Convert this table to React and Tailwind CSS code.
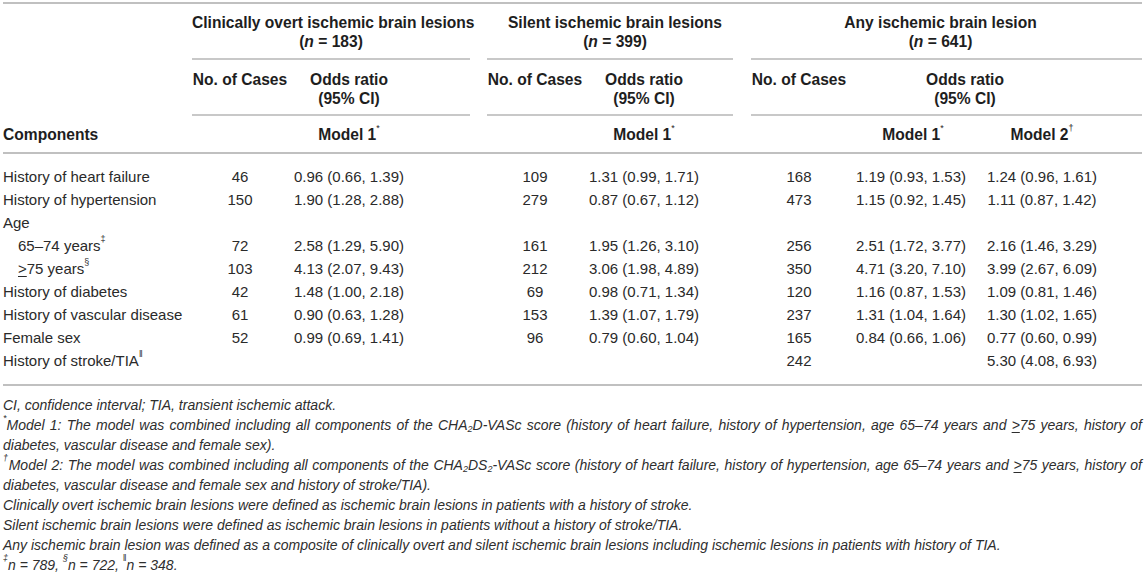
import React from "react";

const COLS =
  "grid grid-cols-[189px_96px_122px_60px_17px_96px_122px_28px_18px_96px_128px_134px_33px]";

function Sup({ children }) {
  return <sup className="text-[9px] align-[5px] leading-none font-normal">{children}</sup>;
}

function Ge() {
  return <span className="underline underline-offset-2">&gt;</span>;
}

const rows = [
  { label: "History of heart failure", v: ["46", "0.96 (0.66, 1.39)", "109", "1.31 (0.99, 1.71)", "168", "1.19 (0.93, 1.53)", "1.24 (0.96, 1.61)"] },
  { label: "History of hypertension", v: ["150", "1.90 (1.28, 2.88)", "279", "0.87 (0.67, 1.12)", "473", "1.15 (0.92, 1.45)", "1.11 (0.87, 1.42)"] },
  { label: "Age", v: ["", "", "", "", "", "", ""] },
  { label: (<>65–74 years<Sup>‡</Sup></>), indent: true, v: ["72", "2.58 (1.29, 5.90)", "161", "1.95 (1.26, 3.10)", "256", "2.51 (1.72, 3.77)", "2.16 (1.46, 3.29)"] },
  { label: (<><Ge />75 years<Sup>§</Sup></>), indent: true, v: ["103", "4.13 (2.07, 9.43)", "212", "3.06 (1.98, 4.89)", "350", "4.71 (3.20, 7.10)", "3.99 (2.67, 6.09)"] },
  { label: "History of diabetes", v: ["42", "1.48 (1.00, 2.18)", "69", "0.98 (0.71, 1.34)", "120", "1.16 (0.87, 1.53)", "1.09 (0.81, 1.46)"] },
  { label: "History of vascular disease", v: ["61", "0.90 (0.63, 1.28)", "153", "1.39 (1.07, 1.79)", "237", "1.31 (1.04, 1.64)", "1.30 (1.02, 1.65)"] },
  { label: "Female sex", v: ["52", "0.99 (0.69, 1.41)", "96", "0.79 (0.60, 1.04)", "165", "0.84 (0.66, 1.06)", "0.77 (0.60, 0.99)"] },
  { label: (<>History of stroke/TIA<Sup>‖</Sup></>), v: ["", "", "", "", "242", "", "5.30 (4.08, 6.93)"] },
];

export default function App() {
  return (
    <div
      className="bg-white w-[1145px] h-[577px] overflow-hidden text-[#2a2a2a]"
      style={{ fontFamily: '"Liberation Sans", Arial, sans-serif' }}
    >
      <div className="ml-[3px] w-[1139px] pt-[2px]">
        <div className="border-t-2 border-[#c0c0c0]">
          {/* Header row 1 */}
          <div className={`${COLS} text-[15.6px] leading-[19px] font-bold text-[#1e1e1e] whitespace-nowrap`}>
            <div />
            <div className="col-span-3 border-b-2 border-[#c8c8c8] pt-[9px] pb-[7px] text-center">
              <div>Clinically overt ischemic brain lesions</div>
              <div>(<i>n</i> = 183)</div>
            </div>
            <div />
            <div className="col-span-3 border-b-2 border-[#c8c8c8] pt-[9px] pb-[7px] pl-[10px] text-center">
              <div>Silent ischemic brain lesions</div>
              <div>(<i>n</i> = 399)</div>
            </div>
            <div />
            <div className="col-span-4 border-b-2 border-[#c8c8c8] pt-[9px] pb-[7px] pr-[12px] text-center">
              <div>Any ischemic brain lesion</div>
              <div>(<i>n</i> = 641)</div>
            </div>
          </div>

          {/* Header row 2 */}
          <div className={`${COLS} text-[15.6px] leading-[19px] font-bold text-[#1e1e1e] whitespace-nowrap`}>
            <div />
            <div className="border-b-2 border-[#c8c8c8] pt-[10px] pb-[6px] text-center">No. of Cases</div>
            <div className="border-b-2 border-[#c8c8c8] pt-[10px] pb-[6px] text-center">
              <div>Odds ratio</div>
              <div>(95% CI)</div>
            </div>
            <div className="border-b-2 border-[#c8c8c8]" />
            <div />
            <div className="border-b-2 border-[#c8c8c8] pt-[10px] pb-[6px] text-center">No. of Cases</div>
            <div className="border-b-2 border-[#c8c8c8] pt-[10px] pb-[6px] text-center">
              <div>Odds ratio</div>
              <div>(95% CI)</div>
            </div>
            <div className="border-b-2 border-[#c8c8c8]" />
            <div />
            <div className="border-b-2 border-[#c8c8c8] pt-[10px] pb-[6px] text-center">No. of Cases</div>
            <div className="col-span-2 border-b-2 border-[#c8c8c8] pt-[10px] pb-[6px] pr-[26px] text-center">
              <div>Odds ratio</div>
              <div>(95% CI)</div>
            </div>
            <div className="border-b-2 border-[#c8c8c8]" />
          </div>

          {/* Header row 3 */}
          <div className={`${COLS} text-[15.6px] leading-[19px] font-bold text-[#1e1e1e] border-b-2 border-[#c0c0c0] pt-[9px] pb-[8px] whitespace-nowrap`}>
            <div>Components</div>
            <div />
            <div className="text-center">Model 1<Sup>*</Sup></div>
            <div />
            <div />
            <div />
            <div className="text-center">Model 1<Sup>*</Sup></div>
            <div />
            <div />
            <div />
            <div className="text-center pl-[4px]">Model 1<Sup>*</Sup></div>
            <div className="text-center">Model 2<Sup>†</Sup></div>
            <div />
          </div>

          {/* Body */}
          <div className="border-b-2 border-[#c0c0c0] pt-[11px] pb-[12px] text-[15px] leading-[19px]">
            {rows.map((r, i) => (
              <div key={i} className={`${COLS} py-[2px] whitespace-nowrap`}>
                <div className={r.indent ? "pl-[15px]" : ""}>{r.label}</div>
                <div className="text-center">{r.v[0]}</div>
                <div className="text-center">{r.v[1]}</div>
                <div />
                <div />
                <div className="text-center">{r.v[2]}</div>
                <div className="text-center">{r.v[3]}</div>
                <div />
                <div />
                <div className="text-center">{r.v[4]}</div>
                <div className="text-center">{r.v[5]}</div>
                <div className="text-center">{r.v[6]}</div>
                <div />
              </div>
            ))}
          </div>

          {/* Footnotes */}
          <div className="pt-[9px] text-[14px] leading-[20px] italic text-[#2e2e2e]">
            <div className="whitespace-nowrap">CI, confidence interval; TIA, transient ischemic attack.</div>
            <div className="text-justify [text-align-last:justify]">
              <Sup>*</Sup>Model 1: The model was combined including all components of the CHA<sub className="text-[9px] leading-none">2</sub>D-VASc score (history of heart failure, history of hypertension, age 65–74 years and <Ge />75 years, history of
            </div>
            <div className="whitespace-nowrap">diabetes, vascular disease and female sex).</div>
            <div className="text-justify [text-align-last:justify]">
              <Sup>†</Sup>Model 2: The model was combined including all components of the CHA<sub className="text-[9px] leading-none">2</sub>DS<sub className="text-[9px] leading-none">2</sub>-VASc score (history of heart failure, history of hypertension, age 65–74 years and <Ge />75 years, history of
            </div>
            <div className="whitespace-nowrap">diabetes, vascular disease and female sex and history of stroke/TIA).</div>
            <div className="whitespace-nowrap">Clinically overt ischemic brain lesions were defined as ischemic brain lesions in patients with a history of stroke.</div>
            <div className="whitespace-nowrap">Silent ischemic brain lesions were defined as ischemic brain lesions in patients without a history of stroke/TIA.</div>
            <div className="whitespace-nowrap">Any ischemic brain lesion was defined as a composite of clinically overt and silent ischemic brain lesions including ischemic lesions in patients with history of TIA.</div>
            <div className="whitespace-nowrap">
              <Sup>‡</Sup>n = 789, <Sup>§</Sup>n = 722, <Sup>‖</Sup>n = 348.
            </div>
          </div>
        </div>
      </div>
    </div>
  );
}
